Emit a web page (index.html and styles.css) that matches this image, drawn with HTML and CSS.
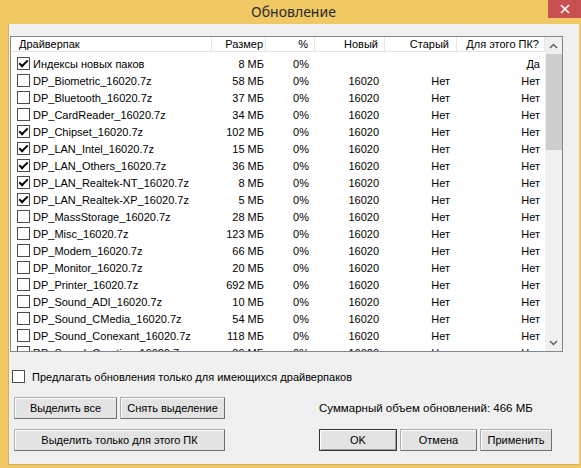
FILE: index.html
```html
<!DOCTYPE html>
<html lang="ru">
  <head>
    <meta charset="UTF-8" />
    <link rel="stylesheet" href="styles.css">
  </head>
  <body>
    <div class="window">
      <div class="titlebar">
        <span class="title">Обновление</span>
        <span class="close">
          <svg width="10" height="10" viewBox="0 0 10 10"><path d="M1 1 L9 9 M9 1 L1 9" stroke="#fff" stroke-width="1.6" /></svg>
        </span>
      </div>
      <div class="client">
        <div class="listbox">
          <div class="list">
            <div class="row head">
              <div class="cell name">Драйверпак</div>
              <div class="cell">Размер</div>
              <div class="cell">%</div>
              <div class="cell">Новый</div>
              <div class="cell">Старый</div>
              <div class="cell">Для этого ПК?</div>
            </div>
            <div class="rows">
              <div class="row"><div class="cell name"><span class="check on"></span>Индексы новых паков</div><div class="cell">8 МБ</div><div class="cell">0%</div><div class="cell"></div><div class="cell"></div><div class="cell">Да</div></div>
              <div class="row"><div class="cell name"><span class="check"></span>DP_Biometric_16020.7z</div><div class="cell">58 МБ</div><div class="cell">0%</div><div class="cell">16020</div><div class="cell">Нет</div><div class="cell">Нет</div></div>
              <div class="row"><div class="cell name"><span class="check"></span>DP_Bluetooth_16020.7z</div><div class="cell">37 МБ</div><div class="cell">0%</div><div class="cell">16020</div><div class="cell">Нет</div><div class="cell">Нет</div></div>
              <div class="row"><div class="cell name"><span class="check"></span>DP_CardReader_16020.7z</div><div class="cell">34 МБ</div><div class="cell">0%</div><div class="cell">16020</div><div class="cell">Нет</div><div class="cell">Нет</div></div>
              <div class="row"><div class="cell name"><span class="check on"></span>DP_Chipset_16020.7z</div><div class="cell">102 МБ</div><div class="cell">0%</div><div class="cell">16020</div><div class="cell">Нет</div><div class="cell">Нет</div></div>
              <div class="row"><div class="cell name"><span class="check on"></span>DP_LAN_Intel_16020.7z</div><div class="cell">15 МБ</div><div class="cell">0%</div><div class="cell">16020</div><div class="cell">Нет</div><div class="cell">Нет</div></div>
              <div class="row"><div class="cell name"><span class="check on"></span>DP_LAN_Others_16020.7z</div><div class="cell">36 МБ</div><div class="cell">0%</div><div class="cell">16020</div><div class="cell">Нет</div><div class="cell">Нет</div></div>
              <div class="row"><div class="cell name"><span class="check on"></span>DP_LAN_Realtek-NT_16020.7z</div><div class="cell">8 МБ</div><div class="cell">0%</div><div class="cell">16020</div><div class="cell">Нет</div><div class="cell">Нет</div></div>
              <div class="row"><div class="cell name"><span class="check on"></span>DP_LAN_Realtek-XP_16020.7z</div><div class="cell">5 МБ</div><div class="cell">0%</div><div class="cell">16020</div><div class="cell">Нет</div><div class="cell">Нет</div></div>
              <div class="row"><div class="cell name"><span class="check"></span>DP_MassStorage_16020.7z</div><div class="cell">28 МБ</div><div class="cell">0%</div><div class="cell">16020</div><div class="cell">Нет</div><div class="cell">Нет</div></div>
              <div class="row"><div class="cell name"><span class="check"></span>DP_Misc_16020.7z</div><div class="cell">123 МБ</div><div class="cell">0%</div><div class="cell">16020</div><div class="cell">Нет</div><div class="cell">Нет</div></div>
              <div class="row"><div class="cell name"><span class="check"></span>DP_Modem_16020.7z</div><div class="cell">66 МБ</div><div class="cell">0%</div><div class="cell">16020</div><div class="cell">Нет</div><div class="cell">Нет</div></div>
              <div class="row"><div class="cell name"><span class="check"></span>DP_Monitor_16020.7z</div><div class="cell">20 МБ</div><div class="cell">0%</div><div class="cell">16020</div><div class="cell">Нет</div><div class="cell">Нет</div></div>
              <div class="row"><div class="cell name"><span class="check"></span>DP_Printer_16020.7z</div><div class="cell">692 МБ</div><div class="cell">0%</div><div class="cell">16020</div><div class="cell">Нет</div><div class="cell">Нет</div></div>
              <div class="row"><div class="cell name"><span class="check"></span>DP_Sound_ADI_16020.7z</div><div class="cell">10 МБ</div><div class="cell">0%</div><div class="cell">16020</div><div class="cell">Нет</div><div class="cell">Нет</div></div>
              <div class="row"><div class="cell name"><span class="check"></span>DP_Sound_CMedia_16020.7z</div><div class="cell">54 МБ</div><div class="cell">0%</div><div class="cell">16020</div><div class="cell">Нет</div><div class="cell">Нет</div></div>
              <div class="row"><div class="cell name"><span class="check"></span>DP_Sound_Conexant_16020.7z</div><div class="cell">118 МБ</div><div class="cell">0%</div><div class="cell">16020</div><div class="cell">Нет</div><div class="cell">Нет</div></div>
              <div class="row"><div class="cell name"><span class="check"></span>DP_Sound_Creative_16020.7z</div><div class="cell">89 МБ</div><div class="cell">0%</div><div class="cell">16020</div><div class="cell">Нет</div><div class="cell">Нет</div></div>
            </div>
          </div>
          <div class="scrollbar">
            <div class="arrow">
              <svg width="9" height="6" viewBox="0 0 9 6"><path d="M1 5 L4.5 1.5 L8 5" fill="none" stroke="#606060" stroke-width="1.5" /></svg>
            </div>
            <div class="thumb"></div>
            <div class="track"></div>
            <div class="arrow">
              <svg width="9" height="6" viewBox="0 0 9 6"><path d="M1 1 L4.5 4.5 L8 1" fill="none" stroke="#606060" stroke-width="1.5" /></svg>
            </div>
          </div>
        </div>

        <div class="option"><span class="check"></span>Предлагать обновления только для имеющихся драйверпаков</div>

        <div class="footer">
          <div class="leftCol">
            <div class="btnRow">
              <div class="btn w103">Выделить все</div>
              <div class="btn w105">Снять выделение</div>
            </div>
            <div class="btn wide">Выделить только для этого ПК</div>
          </div>
          <div class="rightCol">
            <div class="summary">Суммарный объем обновлений: 466 МБ</div>
            <div class="btnRow">
              <div class="btn default w78">OK</div>
              <div class="btn w77">Отмена</div>
              <div class="btn w72">Применить</div>
            </div>
          </div>
        </div>
      </div>
    </div>
  </body>
</html>
```

FILE: styles.css
```css
body {
  margin: 0;
  background: #f0f0f0;
}
.window {
  width: 581px;
  height: 468px;
  box-sizing: border-box;
  background: #f0c864;
  padding: 0 2px 3px 8px;
  display: flex;
  flex-direction: column;
  font-family: "Liberation Sans", Arial, sans-serif;
  font-size: 11px;
  color: #000;
}
.window .titlebar {
  height: 24px;
  display: flex;
  align-items: center;
  justify-content: center;
  position: relative;
}
.window .titlebar .title {
  font-family: "Noto Sans", "Open Sans", sans-serif;
  font-size: 14px;
  color: #2a2a2a;
  margin: 0 0 2px 0;
}
.window .titlebar .close {
  position: absolute;
  right: -2px;
  top: 0;
  width: 33px;
  height: 18px;
  background: #c75050;
  display: flex;
  align-items: center;
  justify-content: center;
}
.window .client {
  flex: 1;
  background: #f0f0f0;
  box-shadow: inset 1px 0 0 #d6b15a, inset 0 -1px 0 #d6b15a;
  padding: 12px 0 0 2px;
}

/* list view */
.client .listbox {
  width: 553px;
  height: 316px;
  box-sizing: border-box;
  border: 1px solid #828790;
  background: #fff;
  display: flex;
}
.client .listbox .list {
  width: 534px;
  display: flex;
  flex-direction: column;
}
.client .listbox .row {
  display: grid;
  grid-template-columns: 201px 54px 49px 70px 72px 88px;
  height: 17px;
  align-items: center;
}
.client .listbox .row.head {
  height: 15px;
  box-sizing: border-box;
  border-bottom: 1px solid #e5e5e5;
}
.client .listbox .row.head .cell {
  height: 14px;
  line-height: 14px;
  border-right: 1px solid #e5e5e5;
}
.client .listbox .rows {
  flex: 1;
  overflow: hidden;
  padding-top: 3px;
}
.client .listbox .cell {
  text-align: right;
  white-space: nowrap;
  overflow: hidden;
}
.client .listbox .cell:nth-child(2) { padding-right: 2px; }
.client .listbox .cell:nth-child(3) { padding-right: 6px; }
.client .listbox .cell:nth-child(4) { padding-right: 6px; }
.client .listbox .cell:nth-child(5) { padding-right: 7px; }
.client .listbox .cell:nth-child(6) { padding-right: 5px; }
.client .listbox .cell.name {
  text-align: left;
  display: flex;
  align-items: center;
  padding-left: 6px;
}
.client .listbox .head .cell.name {
  padding-left: 8px;
}

/* checkbox */
.check {
  width: 13px;
  height: 13px;
  box-sizing: border-box;
  border: 1px solid #4d4d4d;
  background: #fff;
  display: inline-flex;
  align-items: center;
  justify-content: center;
  margin-right: 3px;
  flex-shrink: 0;
}
.check.on::after {
  content: "";
  width: 3px;
  height: 7px;
  border: solid #000;
  border-width: 0 2px 2px 0;
  transform: translateY(-1px) rotate(45deg);
}

/* scrollbar */
.client .listbox .scrollbar {
  width: 17px;
  background: #f0f0f0;
  display: flex;
  flex-direction: column;
}
.client .listbox .scrollbar .arrow {
  height: 17px;
  display: flex;
  align-items: center;
  justify-content: center;
}
.client .listbox .scrollbar .thumb {
  height: 96px;
  margin-left: 1px;
  background: #cdcdcd;
}
.client .listbox .scrollbar .track {
  flex: 1;
}

/* bottom option */
.client .option {
  display: flex;
  align-items: center;
  margin: 18px 0 0 2px;
  height: 13px;
}
.client .option .check {
  margin-right: 7px;
}

/* buttons */
.client .footer {
  display: flex;
  gap: 94px;
  margin: 14px 0 0 4px;
}
.client .footer .leftCol,
.client .footer .rightCol {
  display: flex;
  flex-direction: column;
  gap: 10px;
}
.client .footer .btnRow {
  display: flex;
  gap: 3px;
}
.client .footer .summary {
  height: 22px;
  line-height: 22px;
  font-size: 11.5px;
}
.btn {
  height: 22px;
  box-sizing: border-box;
  border: 1px solid #adadad;
  border-right-color: #6e6e6e;
  border-bottom-color: #6e6e6e;
  box-shadow: inset 1px 1px 0 #fff;
  background: #e3e3e3;
  display: flex;
  align-items: center;
  justify-content: center;
}
.btn.default {
  border: 1px solid #333;
  box-shadow: inset 1px 1px 0 #fff, inset -1px -1px 0 #a0a0a0;
}
.btn.w103 { width: 103px; }
.btn.w105 { width: 105px; }
.btn.wide { width: 211px; }
.btn.w78 { width: 78px; }
.btn.w77 { width: 77px; }
.btn.w72 { width: 72px; }
```
